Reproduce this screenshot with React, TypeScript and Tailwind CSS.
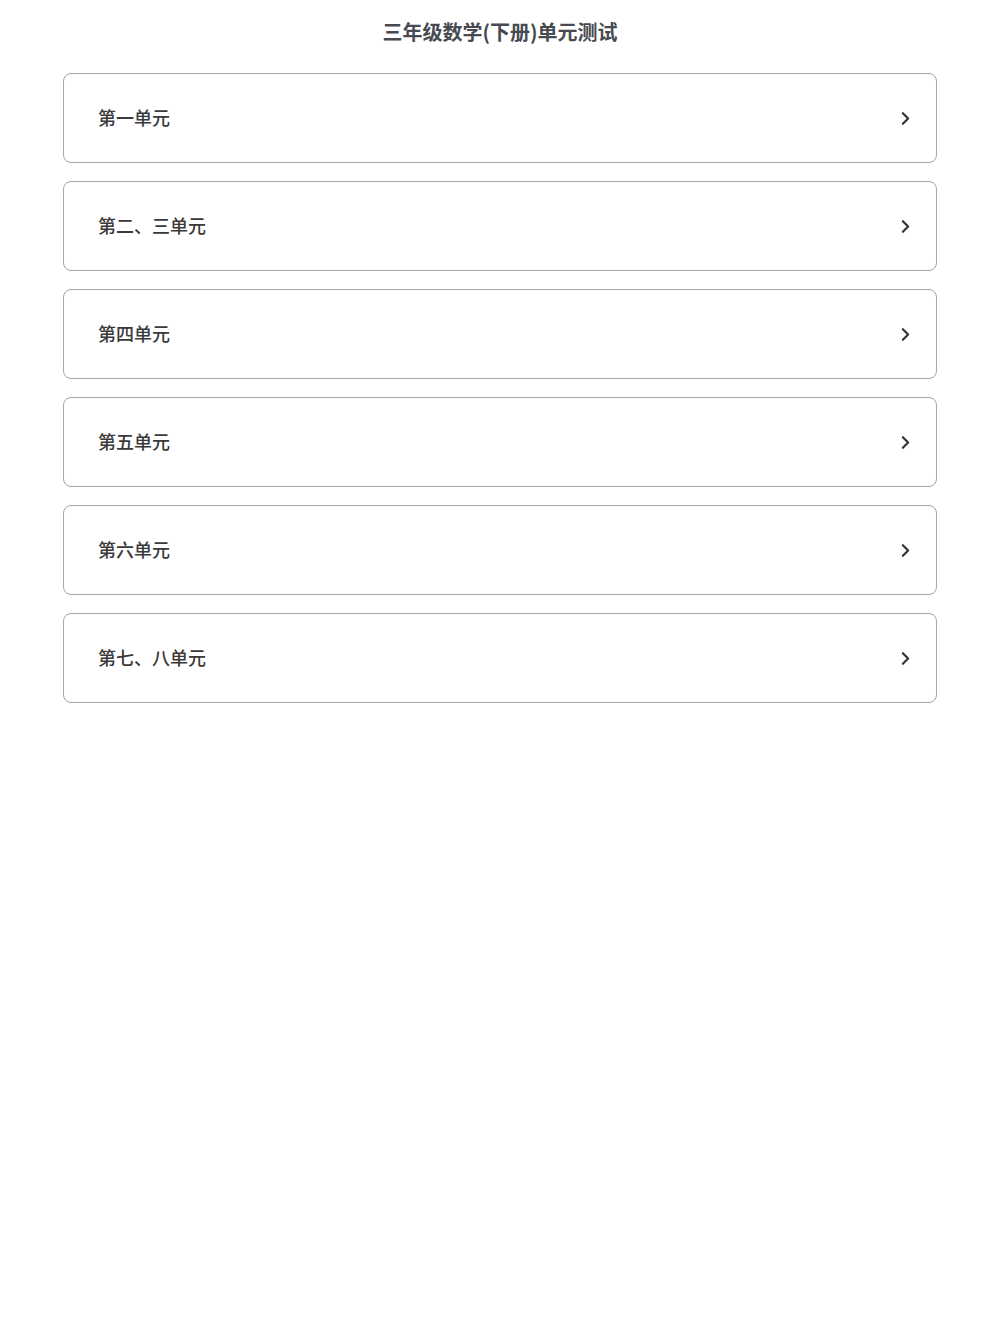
import React from 'react';
import { ChevronRight } from 'lucide-react';

const units = ['第一单元', '第二、三单元', '第四单元', '第五单元', '第六单元', '第七、八单元'];

const App: React.FC = () => {
  return (
    <div
      className="min-h-[1334px] bg-white"
      style={{ fontFamily: '"Noto Sans CJK SC", "Noto Sans", sans-serif' }}
    >
      {/* 标题 */}
      <h1 className="h-[73px] pt-[18px] text-center text-[20px] leading-[28px] font-bold text-[#474a50]">
        三年级数学(下册)单元测试
      </h1>

      {/* 单元列表 */}
      <div className="mx-[63px] flex flex-col gap-[18px]">
        {units.map((unit) => (
          <div
            key={unit}
            className="h-[90px] flex items-center justify-between rounded-lg border border-[#a8a8a8] pl-[34px] pr-[20px]"
          >
            <span className="text-[18px] leading-[24px] pb-[2px] font-medium text-[#3a3a3a]">{unit}</span>
            <ChevronRight className="w-[21px] h-[21px] text-[#333]" strokeWidth={2.5} />
          </div>
        ))}
      </div>
    </div>
  );
};

export default App;
